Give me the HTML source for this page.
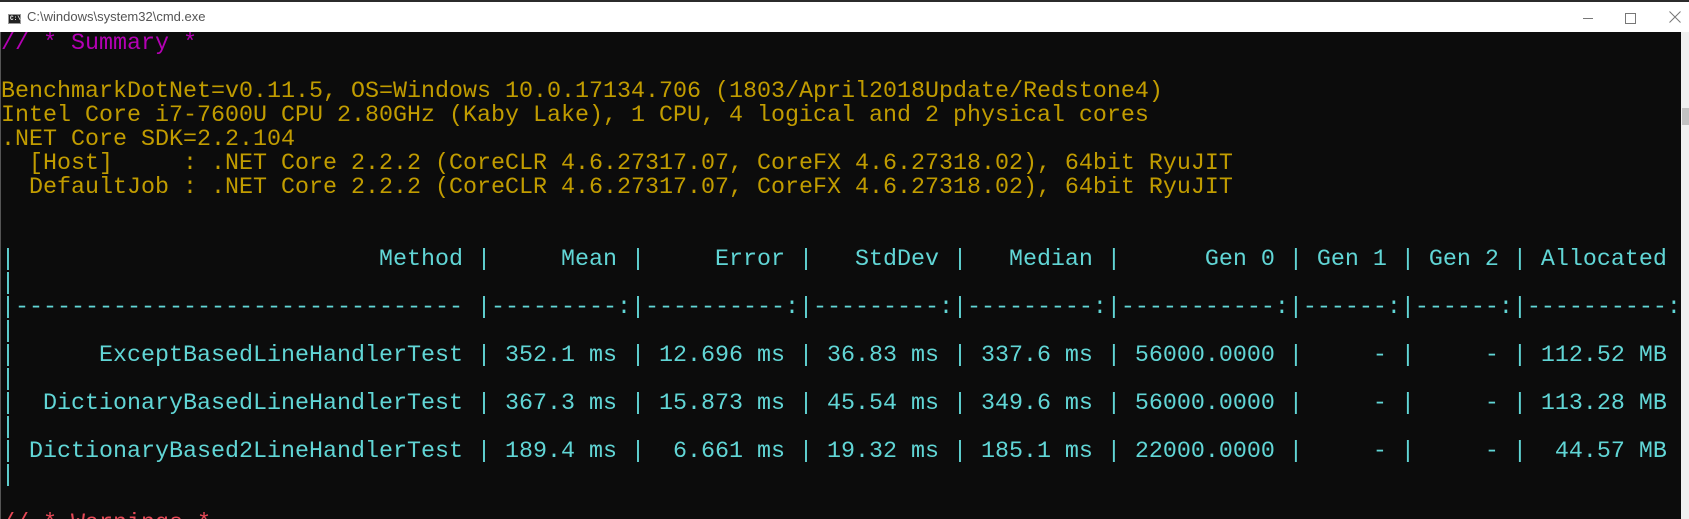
<!DOCTYPE html>
<html><head><meta charset="utf-8"><style>
html,body{margin:0;padding:0;width:1689px;height:519px;overflow:hidden;background:#0c0c0c;}
#top{position:absolute;left:0;top:0;width:1689px;height:2px;background:#2b2b2b;}
#title{position:absolute;left:0;top:2px;width:1689px;height:30px;background:#fff;}
#title .t{position:absolute;left:27px;top:7px;font:13px "Liberation Sans",sans-serif;color:#555;}
#icon{position:absolute;left:8px;top:12px;width:13px;height:10px;background:#222;border:1px solid #999;box-sizing:border-box;}
#icon span{position:absolute;left:1px;top:1px;font:bold 6px "Liberation Mono",monospace;color:#fff;line-height:6px;}
.min{position:absolute;left:1583px;top:16px;width:10px;height:1px;background:#777;}
.max{position:absolute;left:1625px;top:11px;width:9px;height:9px;border:1px solid #777;}
#con{position:absolute;left:1px;top:32px;width:1680px;height:487px;overflow:hidden;}
pre{margin:0;font-family:"Liberation Mono",monospace;font-size:23.33px;line-height:24px;white-space:pre;}
.m{color:#b400b4}.y{color:#c19c00}.c{color:#61d6d6}.r{color:#e74856}
#sb{position:absolute;left:1681px;top:32px;width:8px;height:487px;background:#f0f0f0;}
#thumb{position:absolute;left:1682px;top:108px;width:7px;height:17px;background:#c2c2c2;}
#lb{position:absolute;left:0;top:32px;width:1px;height:487px;background:#555;}
</style></head><body>
<div id="top"></div>
<div id="title"><div id="icon"><span>C:\</span></div><div class="t">C:\windows\system32\cmd.exe</div>
<div class="min"></div><div class="max"></div>
<svg style="position:absolute;left:1669px;top:9px" width="12" height="12"><path d="M0.5 0.5L11.5 11.5M11.5 0.5L0.5 11.5" stroke="#777" stroke-width="1"/></svg>
</div>
<div id="con"><pre><span class="m">// * Summary *</span>

<span class="y">BenchmarkDotNet=v0.11.5, OS=Windows 10.0.17134.706 (1803/April2018Update/Redstone4)
Intel Core i7-7600U CPU 2.80GHz (Kaby Lake), 1 CPU, 4 logical and 2 physical cores
.NET Core SDK=2.2.104
  [Host]     : .NET Core 2.2.2 (CoreCLR 4.6.27317.07, CoreFX 4.6.27318.02), 64bit RyuJIT
  DefaultJob : .NET Core 2.2.2 (CoreCLR 4.6.27317.07, CoreFX 4.6.27318.02), 64bit RyuJIT</span>


<span class="c">|                          Method |     Mean |     Error |   StdDev |   Median |      Gen 0 | Gen 1 | Gen 2 | Allocated 
|
|-------------------------------- |---------:|----------:|---------:|---------:|-----------:|------:|------:|----------:
|
|      ExceptBasedLineHandlerTest | 352.1 ms | 12.696 ms | 36.83 ms | 337.6 ms | 56000.0000 |     - |     - | 112.52 MB 
|
|  DictionaryBasedLineHandlerTest | 367.3 ms | 15.873 ms | 45.54 ms | 349.6 ms | 56000.0000 |     - |     - | 113.28 MB 
|
| DictionaryBased2LineHandlerTest | 189.4 ms |  6.661 ms | 19.32 ms | 185.1 ms | 22000.0000 |     - |     - |  44.57 MB 
|</span>

<span class="r">// * Warnings *</span></pre></div>
<div id="lb"></div>
<div id="sb"></div><div id="thumb"></div>
</body></html>
